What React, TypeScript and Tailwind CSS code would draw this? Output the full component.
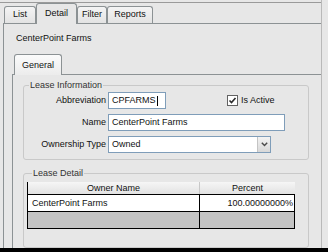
import React from "react";

const Tab = ({ label, selected, w }: { label: string; selected?: boolean; w: string }) => (
  <div
    className={
      selected
        ? `relative z-10 -mb-px h-[21px] ${w} flex items-start justify-center pt-[5px] border border-b-0 border-[#8c9294] rounded-t-[3px] bg-[#e7e7e7]`
        : `h-[17px] ${w} flex items-start justify-center pt-[3px] border border-b-0 border-[#8c9294] rounded-t-[3px] bg-gradient-to-b from-[#f4f4f4] to-[#e3e3e3]`
    }
  >
    {label}
  </div>
);

const Field = ({ label, children }: { label: string; children: React.ReactNode }) => (
  <div className="flex items-center h-[17px]">
    <div className="w-[84px] text-right pr-[2px]">{label}</div>
    {children}
  </div>
);

export default function App() {
  return (
    <div className="w-[328px] h-[252px] bg-[#e7e7e7] flex flex-col overflow-hidden font-['Liberation_Sans',Arial,sans-serif] text-[9px] text-[#111] leading-none">
      <div className="flex-1 flex">
        <div className="w-[322px] flex flex-col border-r border-[#b9b9b9]">
          {/* outer tab strip */}
          <div className="mt-[2px] h-[21px] border-t border-[#9a9a9a] flex items-end pl-[4px]">
            <Tab label="List" w="w-[32px]" />
            <Tab label="Detail" w="w-[41px]" selected />
            <Tab label="Filter" w="w-[30px]" />
            <Tab label="Reports" w="w-[46px]" />
          </div>

          {/* outer page */}
          <div className="flex-1 ml-[3px] border-l border-t border-[#8c9294] flex flex-col">
            <div className="pl-[12px] pt-[10px] h-[28px]">CenterPoint Farms</div>

            {/* inner tab strip */}
            <div className="ml-[8px] h-[22px] flex items-end">
              <div className="relative z-10 -mb-px ml-[2px] h-[21px] w-[48px] flex items-start justify-center pt-[6px] border border-b-0 border-[#8c9294] rounded-t-[3px] bg-gradient-to-b from-[#fbfbfb] to-[#ececec]">
                General
              </div>
            </div>

            {/* inner page */}
            <div className="flex-1 ml-[8px] border-l border-t border-[#8c9294] pl-[10px] pr-[12px] pt-[6px] flex flex-col gap-[9px]">
              <fieldset className="border border-[#c9c9c9] rounded-[3px] px-0 h-[79px]">
                <legend className="ml-[5px] px-[1px] text-[#333]">Lease Information</legend>
                <div className="flex flex-col gap-[5px] pt-[2px]">
                  <Field label="Abbreviation">
                    <div className="w-[58px] h-[17px] bg-white border border-[#7f9db9] flex items-center pl-[3px]">
                      CPFARMS<span className="ml-px w-px h-[10px] bg-black" />
                    </div>
                    <div className="ml-[61px] flex items-center gap-[3px]">
                      <div className="w-[11px] h-[11px] bg-white border border-[#626262] flex items-center justify-center">
                        <svg width="9" height="9" viewBox="0 0 9 9">
                          <path d="M1.5 4.5 L3.5 6.5 L7.5 2" stroke="#2a2a2a" strokeWidth="1.6" fill="none" />
                        </svg>
                      </div>
                      <span>Is Active</span>
                    </div>
                  </Field>
                  <Field label="Name">
                    <div className="w-[177px] h-[17px] bg-white border border-[#7f9db9] flex items-center pl-[3px]">
                      CenterPoint Farms
                    </div>
                  </Field>
                  <Field label="Ownership Type">
                    <div className="w-[163px] h-[17px] bg-white border border-[#7f9db9] flex items-center">
                      <span className="flex-1 pl-[3px]">Owned</span>
                      <div className="w-[13px] h-[15px] bg-gradient-to-b from-[#f3f3f3] to-[#d8d8d8] border-l border-[#c4c4c4] flex items-center justify-center">
                        <svg width="7" height="5" viewBox="0 0 7 5">
                          <path d="M0.8 0.8 L3.5 3.6 L6.2 0.8" stroke="#4a4a4a" strokeWidth="1.4" fill="none" />
                        </svg>
                      </div>
                    </div>
                  </Field>
                </div>
              </fieldset>

              <fieldset className="flex-1 border border-[#c9c9c9] rounded-[3px] px-[3px]">
                <legend className="ml-[5px] px-[1px] text-[#333]">Lease Detail</legend>
                <div className="mt-[4px] w-[268px] border-l border-b border-black">
                  <div className="flex h-[12px] bg-gradient-to-b from-[#f6f6f6] to-[#e2e2e2]">
                    <div className="w-[172px] flex items-center justify-center border-r border-[#c8c8c8]">Owner Name</div>
                    <div className="flex-1 flex items-center justify-center">Percent</div>
                  </div>
                  <div className="flex h-[18px] bg-white border-b border-black border-t border-t-black">
                    <div className="w-[172px] flex items-center pl-[4px] border-r border-black">CenterPoint Farms</div>
                    <div className="flex-1 flex items-center justify-end pr-[1px] border-r border-black">100.00000000%</div>
                  </div>
                  <div className="flex h-[16px] bg-[#c4c4c4]">
                    <div className="w-[172px] border-r border-black" />
                    <div className="flex-1 border-r border-black" />
                  </div>
                </div>
              </fieldset>
            </div>
          </div>
        </div>
      </div>
      <div className="h-[4px] bg-black" />
    </div>
  );
}
